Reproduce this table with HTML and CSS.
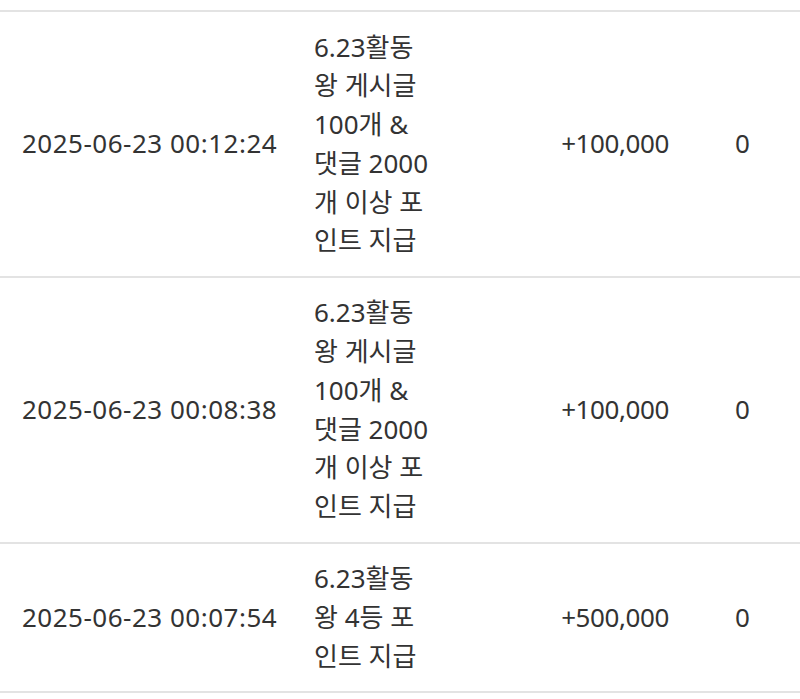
FILE: index.html
```html
<!DOCTYPE html>
<html lang="ko">
<head>
<meta charset="utf-8">
<link rel="stylesheet" href="styles.css">
</head>
<body>
<div class="prev"></div>
<table class="history">
  <colgroup>
    <col class="c-date">
    <col class="c-desc">
    <col class="c-amt">
    <col class="c-bal">
  </colgroup>
  <tbody>
    <tr>
      <td class="date">2025-06-23 00:12:24</td>
      <td class="desc">6.23활동 왕 게시글 100개 &amp; 댓글 2000개 이상 포인트 지급</td>
      <td class="amt">+100,000</td>
      <td class="bal">0</td>
    </tr>
    <tr>
      <td class="date">2025-06-23 00:08:38</td>
      <td class="desc">6.23활동 왕 게시글 100개 &amp; 댓글 2000개 이상 포인트 지급</td>
      <td class="amt">+100,000</td>
      <td class="bal">0</td>
    </tr>
    <tr>
      <td class="date">2025-06-23 00:07:54</td>
      <td class="desc">6.23활동 왕 4등 포인트 지급</td>
      <td class="amt">+500,000</td>
      <td class="bal">0</td>
    </tr>
  </tbody>
</table>
</body>
</html>
```
FILE: styles.css
```css
html, body {
  margin: 0;
  padding: 0;
  background: #ffffff;
}
body {
  font-family: "Noto Sans", "Noto Sans CJK KR", sans-serif;
  color: #333333;
}
.prev {
  height: 10px;
}
.history {
  width: 800px;
  border-collapse: collapse;
  table-layout: fixed;
  font-size: 26px;
  line-height: 38.8px;
}
.c-date { width: 292px; }
.c-desc { width: 188px; }
.c-amt { width: 210px; }
.c-bal { width: 110px; }
.history tr {
  border-top: 2px solid #e3e3e3;
  border-bottom: 2px solid #e3e3e3;
}
.history td {
  padding: 15.5px 0;
  vertical-align: middle;
}
.date {
  padding-left: 22px !important;
  white-space: nowrap;
  letter-spacing: 0.5px;
}
.desc {
  padding-left: 22px !important;
  padding-right: 46px !important;
}
.amt {
  text-align: right;
  padding-right: 21px !important;
  letter-spacing: -0.4px;
}
.bal {
  padding-left: 45px !important;
}
```
